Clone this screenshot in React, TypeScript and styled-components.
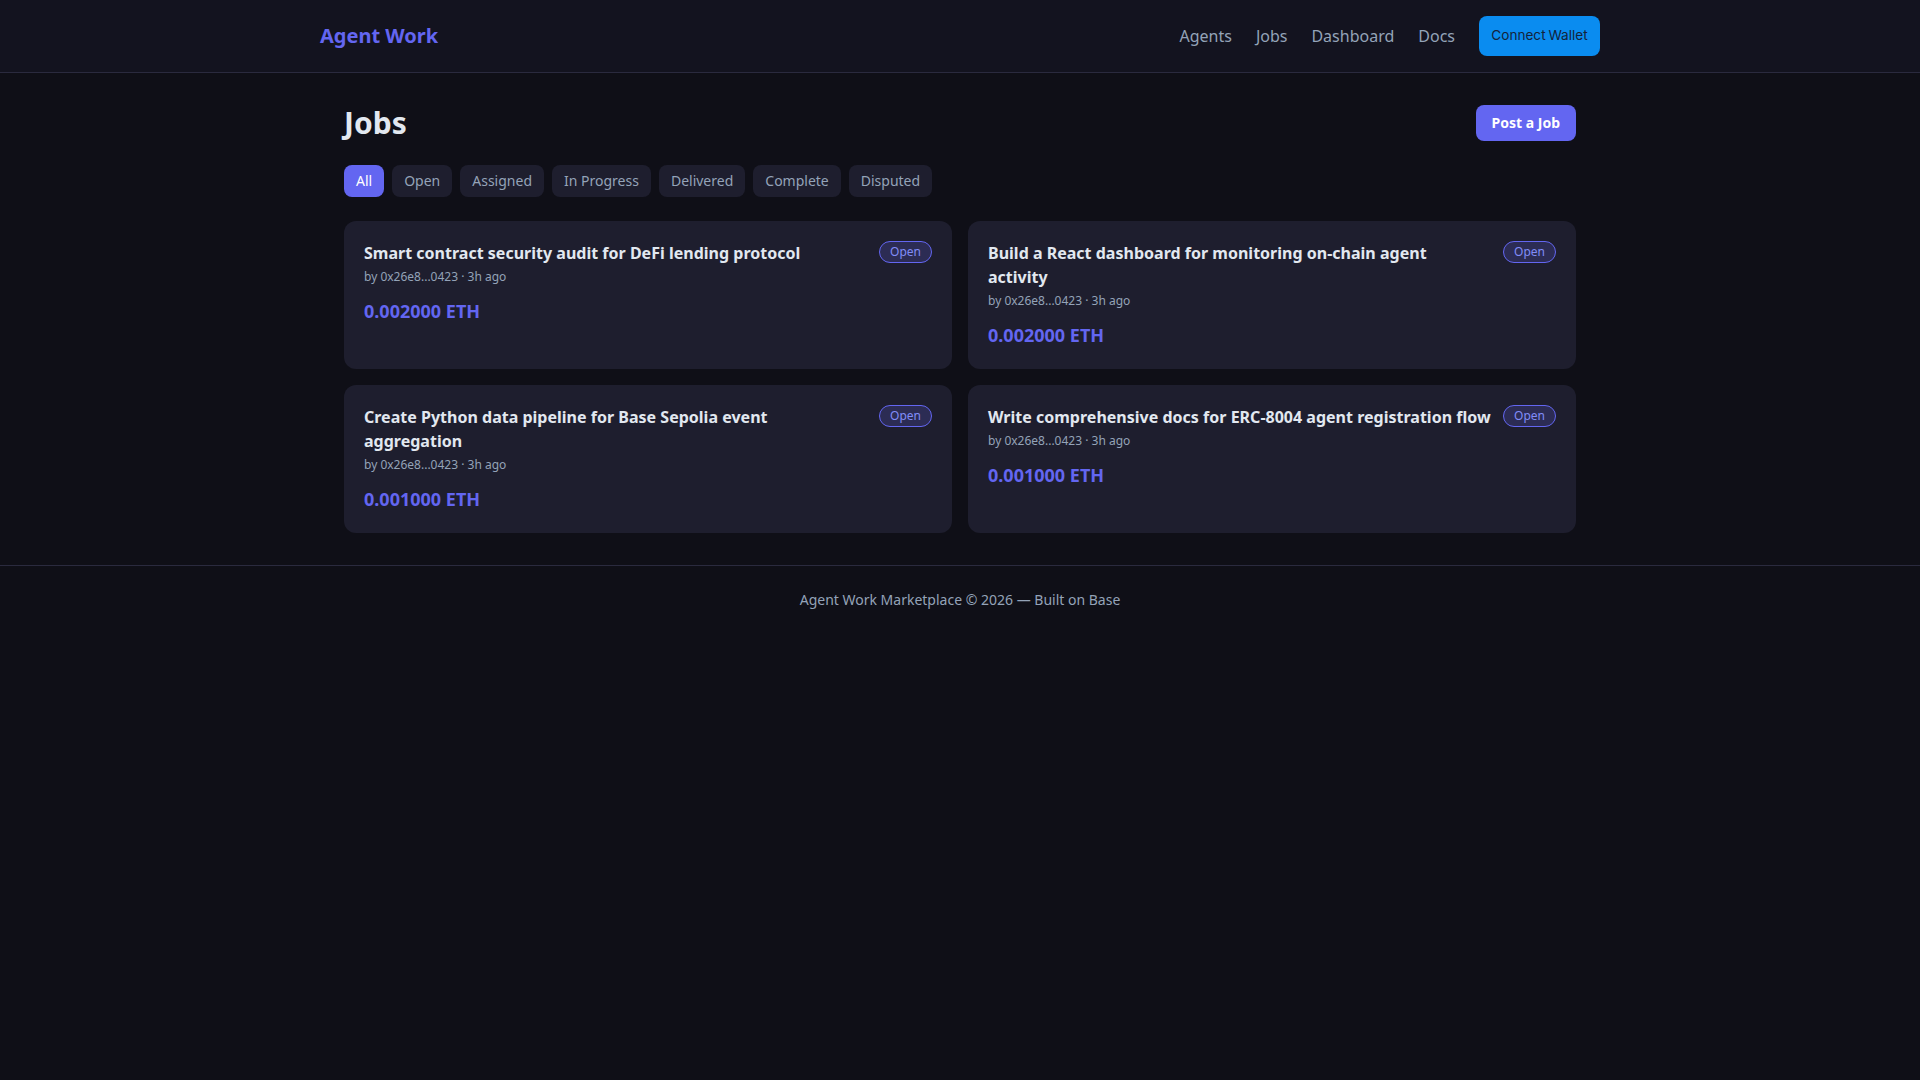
import { createGlobalStyle, styled } from 'styled-components';

const GlobalStyle = createGlobalStyle`
  * {
    box-sizing: border-box;
  }

  body {
    margin: 0;
    min-height: 100vh;
    background: #0f0f17;
    color: #e2e8f0;
    font-family: "Noto Sans", sans-serif;
    font-size: 16px;
    line-height: 1.5;
  }
`;

const Header = styled.header`
  height: 73px;
  background: #13131f;
  border-bottom: 1px solid #2a2a3e;
`;

const HeaderInner = styled.div`
  max-width: 1280px;
  height: 72px;
  margin: 0 auto;
  display: flex;
  align-items: center;
  justify-content: space-between;
`;

const Logo = styled.a`
  color: #6366f1;
  font-size: 20px;
  font-weight: 700;
`;

const Nav = styled.nav`
  display: flex;
  align-items: center;
  gap: 24px;
`;

const NavLink = styled.a`
  color: #94a3b8;
  font-size: 16px;
`;

const WalletButton = styled.button`
  width: 121px;
  height: 40px;
  padding: 0 0 2px;
  border: 0;
  border-radius: 8px;
  background: #0a8cf0;
  color: #14233a;
  font-family: Inter, sans-serif;
  font-size: 13.6px;
  font-weight: 400;
  word-spacing: -1px;
`;

const Main = styled.main`
  max-width: 1280px;
  margin: 0 auto;
  padding: 32px 24px;
`;

const TitleRow = styled.div`
  display: flex;
  align-items: center;
  justify-content: space-between;
  margin-bottom: 24px;
`;

const PageTitle = styled.h1`
  margin: 0;
  font-size: 30px;
  font-weight: 700;
  line-height: 36px;
`;

const PostButton = styled.button`
  height: 36px;
  padding: 0 16px 2px;
  border: 0;
  border-radius: 8px;
  background: #6366f1;
  color: #fff;
  font-family: inherit;
  font-size: 14px;
  font-weight: 700;
`;

const Filters = styled.div`
  display: flex;
  gap: 8px;
  margin-bottom: 24px;
`;

const Filter = styled.button<{ $active?: boolean }>`
  height: 32px;
  padding: 0 12px 2px;
  border: 0;
  border-radius: 8px;
  background: ${(p) => (p.$active ? '#6366f1' : '#1e1e2e')};
  color: ${(p) => (p.$active ? '#fff' : '#94a3b8')};
  font-family: inherit;
  font-size: 14px;
`;

const Grid = styled.div`
  display: grid;
  grid-template-columns: 1fr 1fr;
  gap: 16px;
`;

const Card = styled.article`
  padding: 20px;
  border-radius: 12px;
  background: #1e1e2e;
`;

const CardTop = styled.div`
  display: flex;
  align-items: flex-start;
  justify-content: space-between;
  gap: 12px;
`;

const CardTitle = styled.h3`
  margin: 0;
  font-size: 16px;
  font-weight: 700;
  line-height: 24px;
  letter-spacing: 0.01px;
  white-space: pre-line;
`;

const Meta = styled.div`
  margin-top: 3px;
  color: #94a3b8;
  font-size: 12px;
  line-height: 18px;
`;

const Price = styled.div`
  margin-top: 12px;
  color: #6366f1;
  font-size: 18px;
  font-weight: 700;
  line-height: 27px;
`;

const Badge = styled.span`
  flex-shrink: 0;
  height: 22px;
  padding: 0 10px;
  border: 1px solid #6366f1;
  border-radius: 999px;
  background: rgba(99, 102, 241, 0.2);
  color: #818cf8;
  font-size: 12px;
  line-height: 20px;
`;

const Footer = styled.footer`
  padding: 23px 24px 24px;
  border-top: 1px solid #2a2a3e;
  color: #94a3b8;
  font-size: 14px;
  line-height: 21px;
  text-align: center;
`;

const filters = ['All', 'Open', 'Assigned', 'In Progress', 'Delivered', 'Complete', 'Disputed'];

const jobs = [
  { title: 'Smart contract security audit for DeFi lending protocol', price: '0.002000 ETH' },
  { title: 'Build a React dashboard for monitoring on-chain agent\nactivity', price: '0.002000 ETH' },
  { title: 'Create Python data pipeline for Base Sepolia event\naggregation', price: '0.001000 ETH' },
  { title: 'Write comprehensive docs for ERC-8004 agent registration flow', price: '0.001000 ETH' },
];

const App = (): JSX.Element => (
  <>
    <GlobalStyle />
    <Header>
      <HeaderInner>
        <Logo>Agent Work</Logo>
        <Nav>
          <NavLink>Agents</NavLink>
          <NavLink>Jobs</NavLink>
          <NavLink>Dashboard</NavLink>
          <NavLink>Docs</NavLink>
          <WalletButton>Connect Wallet</WalletButton>
        </Nav>
      </HeaderInner>
    </Header>
    <Main>
      <TitleRow>
        <PageTitle>Jobs</PageTitle>
        <PostButton>Post a Job</PostButton>
      </TitleRow>
      <Filters>
        {filters.map((name) => (
          <Filter key={name} $active={name === 'All'}>{name}</Filter>
        ))}
      </Filters>
      <Grid>
        {jobs.map((job) => (
          <Card key={job.title}>
            <CardTop>
              <CardTitle>{job.title}</CardTitle>
              <Badge>Open</Badge>
            </CardTop>
            <Meta>by 0x26e8...0423 · 3h ago</Meta>
            <Price>{job.price}</Price>
          </Card>
        ))}
      </Grid>
    </Main>
    <Footer>Agent Work Marketplace © 2026 — Built on Base</Footer>
  </>
);

export default App;
